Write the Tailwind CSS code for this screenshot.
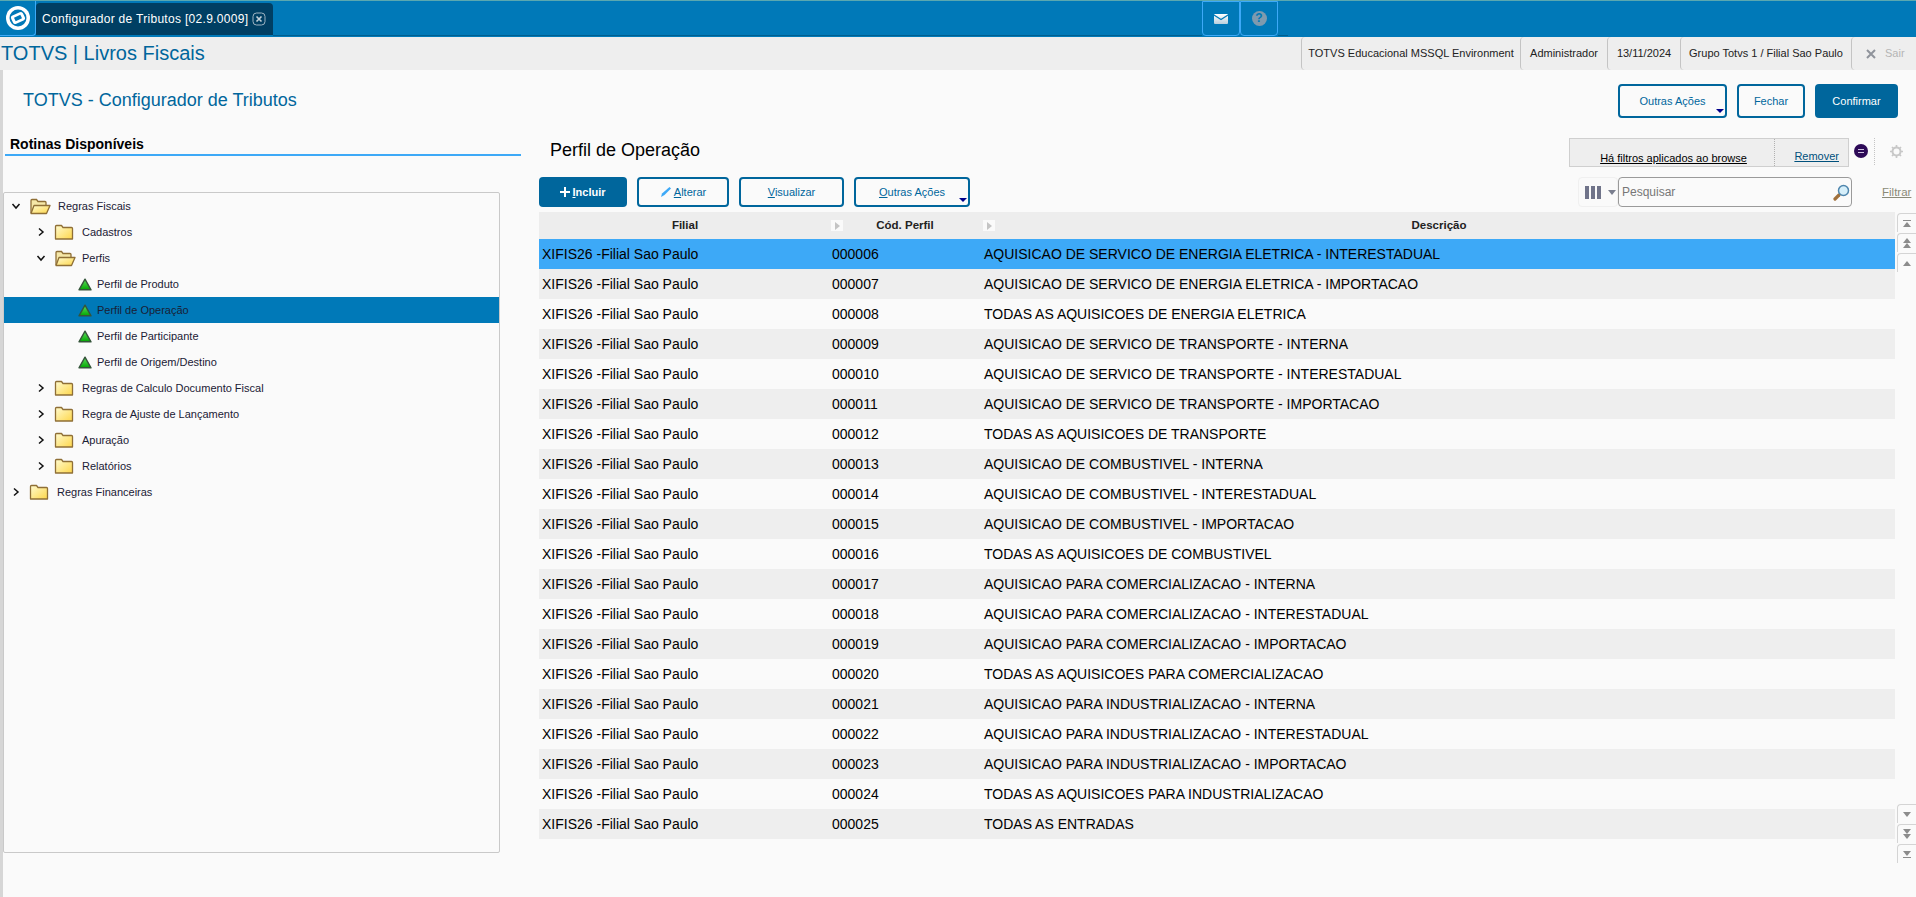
<!DOCTYPE html>
<html lang="pt-BR">
<head>
  <meta charset="UTF-8" />
  <title>Configurador de Tributos</title>
  <script src="https://cdn.jsdelivr.net/npm/@tailwindcss/browser@4"></script>
</head>
<body class="bg-[#fafafa] w-[1916px] h-[897px] overflow-hidden flex flex-col font-['Liberation_Sans',Arial,sans-serif]">

  <!-- shared gradients for the tree icons -->
  <svg class="absolute w-0 h-0" width="0" height="0">
    <defs>
      <linearGradient id="folderFill" x1="0" y1="0" x2="1" y2="1"><stop offset="0" stop-color="#fffbd0" /><stop offset="1" stop-color="#fdd64a" /></linearGradient>
      <linearGradient id="triFill" x1="0" y1="0" x2="0" y2="1"><stop offset="0" stop-color="#5fe05f" /><stop offset="1" stop-color="#02a602" /></linearGradient>
      <linearGradient id="mailFill" x1="0" y1="0" x2="0" y2="1"><stop offset="0" stop-color="#ffffff" /><stop offset="1" stop-color="#b9cfdc" /></linearGradient>
    </defs>
  </svg>

  <!-- Top bar -->
  <div class="h-[37px] bg-[#0079b8] border-t border-[#5aa8b0] flex">
    <div class="w-[36px] h-[35px] border-r border-b border-[#3da9f7] rounded-br flex items-center justify-center">
      <svg width="26" height="26" viewBox="0 0 26 26">
        <circle cx="13" cy="13" r="12" fill="#fff" />
        <circle cx="13" cy="13" r="8.500" fill="#0079b8" />
        <rect x="6.500" y="8.500" width="13" height="9" rx="2.500" fill="#fff" transform="rotate(-25 13 13)" />
        <rect x="9.500" y="11" width="7" height="4" fill="#0079b8" transform="rotate(-25 13 13)" />
      </svg>
    </div>
    <div class="w-[237px] h-[32px] mt-[2px] bg-[#003f63] rounded-t flex items-center pl-[6px] gap-[4px] text-white text-[12px]">
      <span class="whitespace-nowrap tracking-[0.3px]">Configurador de Tributos [02.9.0009]</span>
      <svg width="14" height="14" viewBox="0 0 14 14"><rect x="1" y="1" width="12" height="12" rx="3.500" fill="none" stroke="#9fb4c2" /><path d="M4.500 4.500l5 5M9.500 4.500l-5 5" stroke="#c5d2da" stroke-width="1.600" /></svg>
    </div>
    <div class="w-[929px] border-b border-[#005f8f] h-[35px]"></div>
    <div class="w-[38px] h-[35px] border border-[#3da9f7] rounded-b flex items-center justify-center">
      <svg width="14" height="10" viewBox="0 0 14 10"><rect width="14" height="10" rx="1" fill="url(#mailFill)" /><path d="M0 1l7 4.500L14 1" fill="none" stroke="#0079b8" stroke-width="1.200" /></svg>
    </div>
    <div class="w-[38px] h-[35px] border border-[#3da9f7] rounded-b flex items-center justify-center">
      <span class="w-[15px] h-[15px] rounded-full bg-[#7f9aae] text-[#0079b8] text-[12px] font-bold leading-[15px] text-center">?</span>
    </div>
    <div class="w-[10px] border-b border-[#005f8f] h-[35px]"></div>
  </div>

  <!-- Module bar -->
  <div class="h-[33px] bg-[#eeeeee] flex items-center text-[11px] text-[#222]">
    <div class="flex-1 pl-[1px] text-[20px] leading-[33px] text-[#00669c] whitespace-nowrap">TOTVS | Livros Fiscais</div>
    <div class="h-full w-[219px] border-l border-[#c4c4c4] rounded-l flex items-center justify-center whitespace-nowrap">TOTVS Educacional MSSQL Environment</div>
    <div class="h-full w-[87px] border-l border-[#c4c4c4] rounded-l flex items-center justify-center">Administrador</div>
    <div class="h-full w-[73px] border-l border-[#c4c4c4] rounded-l flex items-center justify-center">13/11/2024</div>
    <div class="h-full w-[171px] border-l border-[#c4c4c4] rounded-l flex items-center justify-center whitespace-nowrap">Grupo Totvs 1 / Filial Sao Paulo</div>
    <div class="h-full w-[65px] border-l border-[#c4c4c4] rounded-l flex items-center pl-[14px] gap-[9px] text-[#b5b5b5]">
      <svg width="10" height="10" viewBox="0 0 10 10"><path d="M1 1l8 8M9 1l-8 8" stroke="#8f939b" stroke-width="2" /></svg>
      <span>Sair</span>
    </div>
  </div>

  <!-- Content -->
  <div class="flex-1 border-l-3 border-[#d6d6d6] flex flex-col min-h-0">
    <div class="h-[65px] flex justify-between items-start pt-[14px] pr-[18px]">
      <div class="pl-[20px] pt-[2px] text-[18px] leading-[28px] text-[#00669c] whitespace-nowrap">TOTVS - Configurador de Tributos</div>
      <div class="flex gap-[10px] text-[11px]">
        <button class="w-[109px] h-[34px] border-2 border-[#00669c] rounded text-[#00669c] relative">Outras Ações<span class="absolute right-[1px] bottom-[3px] border-x-[4px] border-x-transparent border-t-[4px] border-t-[#00008b]"></span></button>
        <button class="w-[68px] h-[34px] border-2 border-[#00669c] rounded text-[#00669c]">Fechar</button>
        <button class="w-[83px] h-[34px] bg-[#00669c] rounded text-white">Confirmar</button>
      </div>
    </div>

    <div class="flex flex-1 min-h-0">
      <!-- Left column -->
      <div class="w-[518px] shrink-0">
        <div class="ml-[2px] h-[21px] border-b-2 border-[#3da9f7] pl-[5px] text-[14px] font-bold leading-[18px] text-black">Rotinas Disponíveis</div>
        <div class="mt-[36px] w-[497px] h-[661px] border border-[#c9c9c9] rounded-[2px] text-[11px] text-[#1a2035]">
          <div class="h-[26px] flex items-center pl-[7px]">
            <svg class="w-[10px] h-[10px]" viewBox="0 0 10 10"><path d="M1.500 3L5 7l3.500-4" fill="none" stroke="#111" stroke-width="1.500" /></svg>
            <svg class="ml-[8px] w-[22px] h-[18px]" viewBox="0 0 22 18"><path d="M2 16V3.500Q2 2.500 3 2.500h4.500l1.500 2h7q1 0 1 1V8" fill="#f5e7a8" stroke="#8f6f36" stroke-width="1.300" /><path d="M2 16.500L5 8.500h16l-3.500 8z" fill="url(#folderFill)" stroke="#8f6f36" stroke-width="1.300" stroke-linejoin="round" /></svg>
            <span class="ml-[7px]">Regras Fiscais</span>
          </div>
          <div class="h-[26px] flex items-center pl-[32px]">
            <svg class="w-[10px] h-[10px]" viewBox="0 0 10 10"><path d="M3 1.500L7 5 3 8.500" fill="none" stroke="#111" stroke-width="1.500" /></svg>
            <svg class="ml-[8px] w-[20px] h-[18px]" viewBox="0 0 20 18"><path d="M1.500 16V3.500Q1.500 2.500 2.500 2.500h5l1.500 2h8.500q1 0 1 1V16z" fill="url(#folderFill)" stroke="#8f6f36" stroke-width="1.300" stroke-linejoin="round" /></svg>
            <span class="ml-[8px]">Cadastros</span>
          </div>
          <div class="h-[26px] flex items-center pl-[32px]">
            <svg class="w-[10px] h-[10px]" viewBox="0 0 10 10"><path d="M1.500 3L5 7l3.500-4" fill="none" stroke="#111" stroke-width="1.500" /></svg>
            <svg class="ml-[8px] w-[22px] h-[18px]" viewBox="0 0 22 18"><path d="M2 16V3.500Q2 2.500 3 2.500h4.500l1.500 2h7q1 0 1 1V8" fill="#f5e7a8" stroke="#8f6f36" stroke-width="1.300" /><path d="M2 16.500L5 8.500h16l-3.500 8z" fill="url(#folderFill)" stroke="#8f6f36" stroke-width="1.300" stroke-linejoin="round" /></svg>
            <span class="ml-[6px]">Perfis</span>
          </div>
          <div class="h-[26px] flex items-center pl-[74px]">
            <svg class="w-[14px] h-[13px]" viewBox="0 0 14 13"><path d="M7 1.200L13 11.800H1z" fill="url(#triFill)" stroke="#35553a" stroke-width="1.400" stroke-linejoin="round" /></svg>
            <span class="ml-[5px]">Perfil de Produto</span>
          </div>
          <div class="h-[26px] flex items-center pl-[74px] bg-[#0079b8]">
            <svg class="w-[14px] h-[13px]" viewBox="0 0 14 13"><path d="M7 1.200L13 11.800H1z" fill="url(#triFill)" stroke="#35553a" stroke-width="1.400" stroke-linejoin="round" /></svg>
            <span class="ml-[5px]">Perfil de Operação</span>
          </div>
          <div class="h-[26px] flex items-center pl-[74px]">
            <svg class="w-[14px] h-[13px]" viewBox="0 0 14 13"><path d="M7 1.200L13 11.800H1z" fill="url(#triFill)" stroke="#35553a" stroke-width="1.400" stroke-linejoin="round" /></svg>
            <span class="ml-[5px]">Perfil de Participante</span>
          </div>
          <div class="h-[26px] flex items-center pl-[74px]">
            <svg class="w-[14px] h-[13px]" viewBox="0 0 14 13"><path d="M7 1.200L13 11.800H1z" fill="url(#triFill)" stroke="#35553a" stroke-width="1.400" stroke-linejoin="round" /></svg>
            <span class="ml-[5px]">Perfil de Origem/Destino</span>
          </div>
          <div class="h-[26px] flex items-center pl-[32px]">
            <svg class="w-[10px] h-[10px]" viewBox="0 0 10 10"><path d="M3 1.500L7 5 3 8.500" fill="none" stroke="#111" stroke-width="1.500" /></svg>
            <svg class="ml-[8px] w-[20px] h-[18px]" viewBox="0 0 20 18"><path d="M1.500 16V3.500Q1.500 2.500 2.500 2.500h5l1.500 2h8.500q1 0 1 1V16z" fill="url(#folderFill)" stroke="#8f6f36" stroke-width="1.300" stroke-linejoin="round" /></svg>
            <span class="ml-[8px]">Regras de Calculo Documento Fiscal</span>
          </div>
          <div class="h-[26px] flex items-center pl-[32px]">
            <svg class="w-[10px] h-[10px]" viewBox="0 0 10 10"><path d="M3 1.500L7 5 3 8.500" fill="none" stroke="#111" stroke-width="1.500" /></svg>
            <svg class="ml-[8px] w-[20px] h-[18px]" viewBox="0 0 20 18"><path d="M1.500 16V3.500Q1.500 2.500 2.500 2.500h5l1.500 2h8.500q1 0 1 1V16z" fill="url(#folderFill)" stroke="#8f6f36" stroke-width="1.300" stroke-linejoin="round" /></svg>
            <span class="ml-[8px]">Regra de Ajuste de Lançamento</span>
          </div>
          <div class="h-[26px] flex items-center pl-[32px]">
            <svg class="w-[10px] h-[10px]" viewBox="0 0 10 10"><path d="M3 1.500L7 5 3 8.500" fill="none" stroke="#111" stroke-width="1.500" /></svg>
            <svg class="ml-[8px] w-[20px] h-[18px]" viewBox="0 0 20 18"><path d="M1.500 16V3.500Q1.500 2.500 2.500 2.500h5l1.500 2h8.500q1 0 1 1V16z" fill="url(#folderFill)" stroke="#8f6f36" stroke-width="1.300" stroke-linejoin="round" /></svg>
            <span class="ml-[8px]">Apuração</span>
          </div>
          <div class="h-[26px] flex items-center pl-[32px]">
            <svg class="w-[10px] h-[10px]" viewBox="0 0 10 10"><path d="M3 1.500L7 5 3 8.500" fill="none" stroke="#111" stroke-width="1.500" /></svg>
            <svg class="ml-[8px] w-[20px] h-[18px]" viewBox="0 0 20 18"><path d="M1.500 16V3.500Q1.500 2.500 2.500 2.500h5l1.500 2h8.500q1 0 1 1V16z" fill="url(#folderFill)" stroke="#8f6f36" stroke-width="1.300" stroke-linejoin="round" /></svg>
            <span class="ml-[8px]">Relatórios</span>
          </div>
          <div class="h-[26px] flex items-center pl-[7px]">
            <svg class="w-[10px] h-[10px]" viewBox="0 0 10 10"><path d="M3 1.500L7 5 3 8.500" fill="none" stroke="#111" stroke-width="1.500" /></svg>
            <svg class="ml-[8px] w-[20px] h-[18px]" viewBox="0 0 20 18"><path d="M1.500 16V3.500Q1.500 2.500 2.500 2.500h5l1.500 2h8.500q1 0 1 1V16z" fill="url(#folderFill)" stroke="#8f6f36" stroke-width="1.300" stroke-linejoin="round" /></svg>
            <span class="ml-[8px]">Regras Financeiras</span>
          </div>
        </div>
      </div>

      <!-- Right column -->
      <div class="ml-[18px] flex-1 min-w-0">
        <div class="h-[42px] flex">
          <div class="w-[1030px] pl-[11px] pt-[5px] text-[18px] leading-[20px] text-black whitespace-nowrap">Perfil de Operação</div>
          <div class="mt-[3px] w-[280px] h-[29px] bg-[#eeeeee] border border-[#cfcfcf] flex items-end text-[11px]">
            <div class="w-[205px] h-full border-r border-dotted border-[#b0b0b0] text-center pt-[11px] underline text-black pl-[3px]">Há filtros aplicados ao browse</div>
            <div class="flex-1 text-right pr-[9px] pb-[2px] underline text-[#00507c]">Remover</div>
          </div>
          <div class="ml-[5px] mt-[9px] w-[14px] h-[14px] rounded-full bg-[#2d0a57] flex items-center justify-center">
            <span class="w-[6px] h-[4px] border-y border-[#cfc4e0]"></span>
          </div>
          <div class="ml-[6px] mt-[3px] h-[27px] border-l border-dotted border-[#c4c4c4]"></div>
          <svg class="ml-[15px] mt-[10px]" width="13" height="13" viewBox="0 0 13 13"><circle cx="6.500" cy="6.500" r="4" fill="none" stroke="#c8c8c8" stroke-width="2" /><path d="M6.500 0v2.500M6.500 10.500V13M0 6.500h2.500M10.500 6.500H13M2 2l1.700 1.700M9.300 9.300L11 11M2 11l1.700-1.700M9.300 3.700L11 2" stroke="#c8c8c8" stroke-width="1.700" /></svg>
        </div>

        <div class="h-[30px] flex text-[11px]">
          <button class="w-[88px] bg-[#00669c] rounded text-white font-bold flex items-center justify-center gap-[2px]">
            <svg width="10" height="10" viewBox="0 0 10 10"><path d="M5 0v10M0 5h10" stroke="#fff" stroke-width="2" /></svg>
            <span><span class="underline">I</span>ncluir</span>
          </button>
          <button class="ml-[10px] w-[92px] border-2 border-[#00669c] rounded text-[#00669c] flex items-center justify-center gap-[2px]">
            <svg width="12" height="12" viewBox="0 0 12 12"><path d="M1 11l1-3.500L9.500 1 11 2.500 4.500 9z" fill="#3da9f7" /></svg>
            <span><span class="underline">A</span>lterar</span>
          </button>
          <button class="ml-[10px] w-[105px] border-2 border-[#00669c] rounded text-[#00669c]"><span class="underline">V</span>isualizar</button>
          <button class="ml-[10px] w-[116px] border-2 border-[#00669c] rounded text-[#00669c] relative"><span class="underline">O</span>utras Ações<span class="absolute right-[1px] bottom-[3px] border-x-[4px] border-x-transparent border-t-[4px] border-t-[#00008b]"></span></button>
          <div class="ml-[608px] w-[40px] border border-[#f0f0f0] rounded flex items-center pl-[6px] gap-[7px]">
            <span class="flex gap-[2px]"><span class="w-[4px] h-[13px] bg-[#70748a]"></span><span class="w-[4px] h-[13px] bg-[#70748a]"></span><span class="w-[4px] h-[13px] bg-[#70748a]"></span></span>
            <span class="border-x-[4px] border-x-transparent border-t-[5px] border-t-[#7a7e8e]"></span>
          </div>
          <div class="w-[234px] border border-[#9a9a9a] rounded flex items-center pl-[3px] pr-[1px] justify-between text-[12px]">
            <span class="text-[#777]">Pesquisar</span>
            <svg width="17" height="17" viewBox="0 0 17 17"><path d="M2 15l4-4" stroke="#a0703c" stroke-width="3.200" stroke-linecap="round" /><circle cx="10.500" cy="6.500" r="5" fill="#d6effa" stroke="#4f86ad" stroke-width="1.500" /></svg>
          </div>
          <div class="ml-[30px] pt-[7px] underline text-[#8a8a78] text-[11.500px]">Filtrar</div>
        </div>

        <!-- Browse -->
        <div class="mt-[5px] flex">
          <div class="w-[1356px] text-[14px] text-black shrink-0">
            <div class="h-[27px] bg-[#ededed] flex text-[11.500px] font-bold text-[#222] leading-[27px]">
              <div class="w-[292px] text-center">Filial</div>
              <div class="w-[152px] relative text-center pr-[4px]"><span class="absolute left-0 top-[8px] w-[12px] h-[11px] bg-[#fafafa] flex items-center justify-center"><span class="border-y-[4px] border-y-transparent border-l-[5px] border-l-[#c4c4c4]"></span></span>Cód. Perfil</div>
              <div class="flex-1 relative text-center"><span class="absolute left-0 top-[8px] w-[12px] h-[11px] bg-[#fafafa] flex items-center justify-center"><span class="border-y-[4px] border-y-transparent border-l-[5px] border-l-[#c4c4c4]"></span></span>Descrição</div>
            </div>
            <div class="h-[30px] bg-[#3da9f7] flex items-center"><div class="w-[292px] pl-[3px]">XIFIS26 -Filial Sao Paulo</div><div class="w-[152px] pl-[1px]">000006</div><div class="pl-[1px] whitespace-nowrap">AQUISICAO DE SERVICO DE ENERGIA ELETRICA - INTERESTADUAL</div></div>
            <div class="h-[30px] bg-[#eeeeee] flex items-center"><div class="w-[292px] pl-[3px]">XIFIS26 -Filial Sao Paulo</div><div class="w-[152px] pl-[1px]">000007</div><div class="pl-[1px] whitespace-nowrap">AQUISICAO DE SERVICO DE ENERGIA ELETRICA - IMPORTACAO</div></div>
            <div class="h-[30px] flex items-center"><div class="w-[292px] pl-[3px]">XIFIS26 -Filial Sao Paulo</div><div class="w-[152px] pl-[1px]">000008</div><div class="pl-[1px] whitespace-nowrap">TODAS AS AQUISICOES DE ENERGIA ELETRICA</div></div>
            <div class="h-[30px] bg-[#eeeeee] flex items-center"><div class="w-[292px] pl-[3px]">XIFIS26 -Filial Sao Paulo</div><div class="w-[152px] pl-[1px]">000009</div><div class="pl-[1px] whitespace-nowrap">AQUISICAO DE SERVICO DE TRANSPORTE - INTERNA</div></div>
            <div class="h-[30px] flex items-center"><div class="w-[292px] pl-[3px]">XIFIS26 -Filial Sao Paulo</div><div class="w-[152px] pl-[1px]">000010</div><div class="pl-[1px] whitespace-nowrap">AQUISICAO DE SERVICO DE TRANSPORTE - INTERESTADUAL</div></div>
            <div class="h-[30px] bg-[#eeeeee] flex items-center"><div class="w-[292px] pl-[3px]">XIFIS26 -Filial Sao Paulo</div><div class="w-[152px] pl-[1px]">000011</div><div class="pl-[1px] whitespace-nowrap">AQUISICAO DE SERVICO DE TRANSPORTE - IMPORTACAO</div></div>
            <div class="h-[30px] flex items-center"><div class="w-[292px] pl-[3px]">XIFIS26 -Filial Sao Paulo</div><div class="w-[152px] pl-[1px]">000012</div><div class="pl-[1px] whitespace-nowrap">TODAS AS AQUISICOES DE TRANSPORTE</div></div>
            <div class="h-[30px] bg-[#eeeeee] flex items-center"><div class="w-[292px] pl-[3px]">XIFIS26 -Filial Sao Paulo</div><div class="w-[152px] pl-[1px]">000013</div><div class="pl-[1px] whitespace-nowrap">AQUISICAO DE COMBUSTIVEL - INTERNA</div></div>
            <div class="h-[30px] flex items-center"><div class="w-[292px] pl-[3px]">XIFIS26 -Filial Sao Paulo</div><div class="w-[152px] pl-[1px]">000014</div><div class="pl-[1px] whitespace-nowrap">AQUISICAO DE COMBUSTIVEL - INTERESTADUAL</div></div>
            <div class="h-[30px] bg-[#eeeeee] flex items-center"><div class="w-[292px] pl-[3px]">XIFIS26 -Filial Sao Paulo</div><div class="w-[152px] pl-[1px]">000015</div><div class="pl-[1px] whitespace-nowrap">AQUISICAO DE COMBUSTIVEL - IMPORTACAO</div></div>
            <div class="h-[30px] flex items-center"><div class="w-[292px] pl-[3px]">XIFIS26 -Filial Sao Paulo</div><div class="w-[152px] pl-[1px]">000016</div><div class="pl-[1px] whitespace-nowrap">TODAS AS AQUISICOES DE COMBUSTIVEL</div></div>
            <div class="h-[30px] bg-[#eeeeee] flex items-center"><div class="w-[292px] pl-[3px]">XIFIS26 -Filial Sao Paulo</div><div class="w-[152px] pl-[1px]">000017</div><div class="pl-[1px] whitespace-nowrap">AQUISICAO PARA COMERCIALIZACAO - INTERNA</div></div>
            <div class="h-[30px] flex items-center"><div class="w-[292px] pl-[3px]">XIFIS26 -Filial Sao Paulo</div><div class="w-[152px] pl-[1px]">000018</div><div class="pl-[1px] whitespace-nowrap">AQUISICAO PARA COMERCIALIZACAO - INTERESTADUAL</div></div>
            <div class="h-[30px] bg-[#eeeeee] flex items-center"><div class="w-[292px] pl-[3px]">XIFIS26 -Filial Sao Paulo</div><div class="w-[152px] pl-[1px]">000019</div><div class="pl-[1px] whitespace-nowrap">AQUISICAO PARA COMERCIALIZACAO - IMPORTACAO</div></div>
            <div class="h-[30px] flex items-center"><div class="w-[292px] pl-[3px]">XIFIS26 -Filial Sao Paulo</div><div class="w-[152px] pl-[1px]">000020</div><div class="pl-[1px] whitespace-nowrap">TODAS AS AQUISICOES PARA COMERCIALIZACAO</div></div>
            <div class="h-[30px] bg-[#eeeeee] flex items-center"><div class="w-[292px] pl-[3px]">XIFIS26 -Filial Sao Paulo</div><div class="w-[152px] pl-[1px]">000021</div><div class="pl-[1px] whitespace-nowrap">AQUISICAO PARA INDUSTRIALIZACAO - INTERNA</div></div>
            <div class="h-[30px] flex items-center"><div class="w-[292px] pl-[3px]">XIFIS26 -Filial Sao Paulo</div><div class="w-[152px] pl-[1px]">000022</div><div class="pl-[1px] whitespace-nowrap">AQUISICAO PARA INDUSTRIALIZACAO - INTERESTADUAL</div></div>
            <div class="h-[30px] bg-[#eeeeee] flex items-center"><div class="w-[292px] pl-[3px]">XIFIS26 -Filial Sao Paulo</div><div class="w-[152px] pl-[1px]">000023</div><div class="pl-[1px] whitespace-nowrap">AQUISICAO PARA INDUSTRIALIZACAO - IMPORTACAO</div></div>
            <div class="h-[30px] flex items-center"><div class="w-[292px] pl-[3px]">XIFIS26 -Filial Sao Paulo</div><div class="w-[152px] pl-[1px]">000024</div><div class="pl-[1px] whitespace-nowrap">TODAS AS AQUISICOES PARA INDUSTRIALIZACAO</div></div>
            <div class="h-[30px] bg-[#eeeeee] flex items-center"><div class="w-[292px] pl-[3px]">XIFIS26 -Filial Sao Paulo</div><div class="w-[152px] pl-[1px]">000025</div><div class="pl-[1px] whitespace-nowrap">TODAS AS ENTRADAS</div></div>
          </div>

          <!-- Scroll buttons -->
          <div class="ml-[2px] mt-[1px] w-[19px] h-[650px] flex flex-col justify-between">
            <div class="flex flex-col gap-[1px]">
              <div class="h-[19px] border-l border-t border-[#d4d4d4] rounded-tl flex flex-col items-center justify-center gap-[1px]"><span class="w-[8px] h-px bg-[#8c8c8c]"></span><span class="border-x-[4px] border-x-transparent border-b-[5px] border-b-[#8c8c8c]"></span></div>
              <div class="h-[19px] border-l border-t border-[#d4d4d4] rounded-tl flex flex-col items-center justify-center"><span class="border-x-[4px] border-x-transparent border-b-[5px] border-b-[#8c8c8c]"></span><span class="border-x-[4px] border-x-transparent border-b-[5px] border-b-[#8c8c8c]"></span></div>
              <div class="h-[19px] border-l border-t border-[#d4d4d4] rounded-tl flex items-center justify-center"><span class="border-x-[4px] border-x-transparent border-b-[5px] border-b-[#8c8c8c]"></span></div>
            </div>
            <div class="flex flex-col gap-[1px]">
              <div class="h-[19px] border-l border-t border-[#d4d4d4] rounded-tl flex items-center justify-center"><span class="border-x-[4px] border-x-transparent border-t-[5px] border-t-[#8c8c8c]"></span></div>
              <div class="h-[19px] border-l border-t border-[#d4d4d4] rounded-tl flex flex-col items-center justify-center"><span class="border-x-[4px] border-x-transparent border-t-[5px] border-t-[#8c8c8c]"></span><span class="border-x-[4px] border-x-transparent border-t-[5px] border-t-[#8c8c8c]"></span></div>
              <div class="h-[19px] border-l border-t border-[#d4d4d4] rounded-tl flex flex-col items-center justify-center gap-[1px]"><span class="border-x-[4px] border-x-transparent border-t-[5px] border-t-[#8c8c8c]"></span><span class="w-[8px] h-px bg-[#8c8c8c]"></span></div>
            </div>
          </div>
        </div>
      </div>
    </div>
  </div>
</body>
</html>
